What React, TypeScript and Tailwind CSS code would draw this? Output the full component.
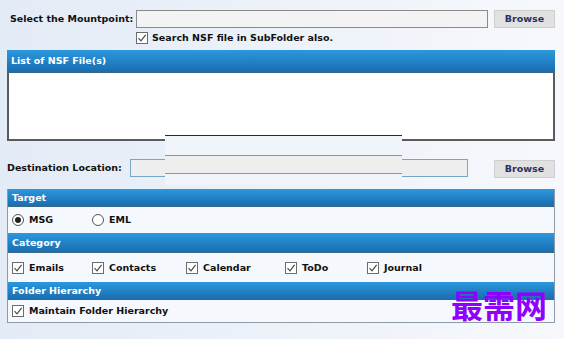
const Check = ({ checked = true }: { checked?: boolean }) => (
  <span className="flex h-[12px] w-[12px] shrink-0 items-center justify-center border border-[#6b6b6b] bg-white">
    {checked && (
      <svg width="10" height="10" viewBox="0 0 10 10">
        <path d="M1.5 5.2 L4 7.8 L8.6 1.8" fill="none" stroke="#4a4a4a" strokeWidth="1.2" />
      </svg>
    )}
  </span>
);

const Radio = ({ checked = false }: { checked?: boolean }) => (
  <span className="flex h-[12px] w-[12px] shrink-0 items-center justify-center rounded-full border border-[#555] bg-white">
    {checked && <span className="h-[6px] w-[6px] rounded-full bg-[#222]" />}
  </span>
);

const Header = ({ title, h }: { title: string; h: string }) => (
  <div
    className={`flex items-center border-b border-[#3b6787] bg-gradient-to-b from-[#2c98de] to-[#1a6db0] pl-[4px] text-[9.5px] font-bold text-white ${h}`}
  >
    {title}
  </div>
);

const Browse = () => (
  <button className="flex h-[18px] w-[61px] items-center justify-center border border-[#cfcfcf] bg-[#e1e1e1] text-[9.5px] font-bold text-[#27325e]">
    Browse
  </button>
);

const Item = ({ label, w, radio, checked }: { label: string; w: string; radio?: boolean; checked?: boolean }) => (
  <div className={`flex items-center gap-[5px] ${w}`}>
    {radio ? <Radio checked={checked} /> : <Check />}
    <span className="whitespace-nowrap text-[9.5px] font-bold text-[#111]">{label}</span>
  </div>
);

export default function App() {
  return (
    <div
      className="relative h-[339px] w-[564px] overflow-hidden bg-gradient-to-r from-[#e3ebf6] via-[#edf2f9] to-[#f6f8fc] text-[#111]"
      style={{ fontFamily: '"DejaVu Sans", Verdana, sans-serif' }}
    >
      <div className="w-[556px]">
        {/* mountpoint */}
        <div className="flex items-center pt-[10px]">
          <div className="w-[136px] whitespace-nowrap pl-[10px] text-[9.5px] font-bold">Select the Mountpoint:</div>
          <div className="h-[18px] w-[352px] border border-[#8a8a8a] bg-[#f3f3f3]" />
          <div className="ml-[6px]">
            <Browse />
          </div>
        </div>
        <div className="mt-[3px] flex items-center gap-[4px] pl-[136px]">
          <Check />
          <span className="whitespace-nowrap text-[9.5px] font-bold">Search NSF file in SubFolder also.</span>
        </div>

        {/* list */}
        <div className="ml-[7px] mt-[5px] w-[548px]">
          <Header title="List of NSF File(s)" h="h-[23px]" />
          <div className="h-[68px] border-x-2 border-b-2 border-[#5b5b5b] bg-white" />
        </div>

        {/* destination */}
        <div className="mt-[16px] flex items-center">
          <div className="w-[130px] whitespace-nowrap pl-[7px] text-[9.5px] font-bold">Destination Location:</div>
          <div className="h-[18px] w-[338px] border border-[#79a6c6] bg-[#eeeeee]" />
          <div className="ml-[26px] mt-[3px]">
            <Browse />
          </div>
        </div>

        {/* options */}
        <div className="ml-[7px] mt-[11px] w-[548px] border-x border-b border-[#8e9aa6]">
          <Header title="Target" h="h-[18px]" />
          <div className="flex h-[26px] items-center bg-[#f5f8fc] pl-[4px]">
            <Item label="MSG" w="w-[80px]" radio checked />
            <Item label="EML" w="w-[80px]" radio />
          </div>
          <Header title="Category" h="h-[20px]" />
          <div className="flex h-[29px] items-center bg-[#f5f8fc] pl-[4px]">
            <Item label="Emails" w="w-[80px]" />
            <Item label="Contacts" w="w-[94px]" />
            <Item label="Calendar" w="w-[99px]" />
            <Item label="ToDo" w="w-[82px]" />
            <Item label="Journal" w="w-[80px]" />
          </div>
          <Header title="Folder Hierarchy" h="h-[18px]" />
          <div className="flex h-[22px] items-center bg-[#f5f8fc] pl-[4px]">
            <Item label="Maintain Folder Hierarchy" w="w-[200px]" />
          </div>
        </div>
      </div>

      {/* stray repaint strip over the list/destination area */}
      <div className="absolute left-[165px] top-[135px] h-[50px] w-[237px] border-t border-[#2b2b2b] bg-[#f0f5fb]">
        <div className="mt-[19px] h-[19px] border-y border-[#6f9ec0] bg-[#eeeeee]" />
      </div>

      {/* watermark */}
      <div
        className="absolute left-[451px] top-[288px] text-[32px] font-bold leading-none text-[#8f00ff]"
        style={{ fontFamily: '"Noto Sans CJK SC", sans-serif' }}
      >
        最需网
      </div>
    </div>
  );
}
